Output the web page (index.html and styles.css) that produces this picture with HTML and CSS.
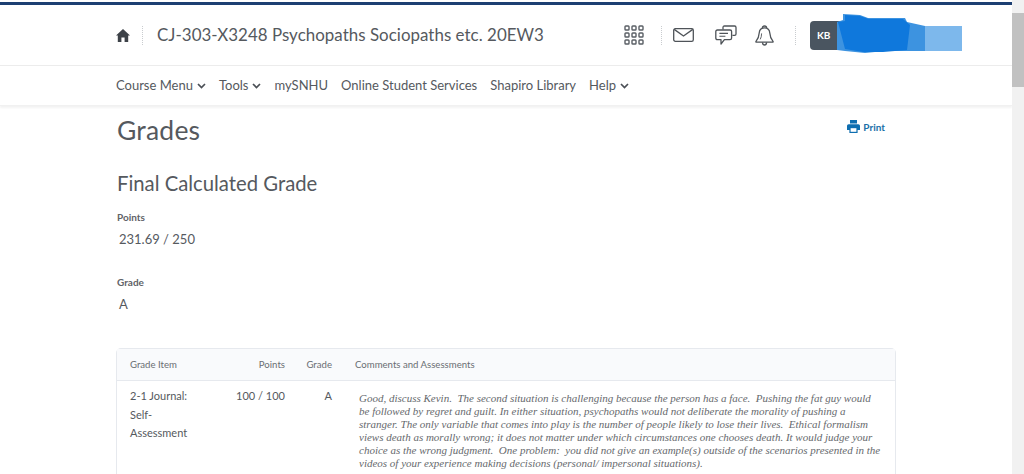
FILE: index.html
```html
<!DOCTYPE html>
<html lang="en">
<head>
<meta charset="utf-8">
<title>Grades</title>
<link rel="stylesheet" href="styles.css">
</head>
<body>
<div class="page">
  <header class="topbar">
    <div class="topbar-inner">
      <svg class="home" viewBox="0 0 14 13" width="14" height="13"><path d="M7 0 L14 6.6 L12.2 6.6 L12.2 13 L8.6 13 L8.6 8.6 L5.4 8.6 L5.4 13 L1.8 13 L1.8 6.6 L0 6.6 Z" fill="#3d4248"/></svg>
      <span class="dots dots-home"></span>
      <span class="course">CJ-303-X3248 Psychopaths Sociopaths etc. 20EW3</span>
      <div class="tools">
        <svg class="ic-grid" width="20" height="20" viewBox="0 0 20 20" fill="none" stroke="#5a5f65" stroke-width="1.4">
          <rect x="1" y="1" width="4" height="4" rx=".8"/><rect x="8" y="1" width="4" height="4" rx=".8"/><rect x="15" y="1" width="4" height="4" rx=".8"/>
          <rect x="1" y="8" width="4" height="4" rx=".8"/><rect x="8" y="8" width="4" height="4" rx=".8"/><rect x="15" y="8" width="4" height="4" rx=".8"/>
          <rect x="1" y="15" width="4" height="4" rx=".8"/><rect x="8" y="15" width="4" height="4" rx=".8"/><rect x="15" y="15" width="4" height="4" rx=".8"/>
        </svg>
        <span class="dots dots-a"></span>
        <svg class="ic-mail" width="21" height="14" viewBox="0 0 21 14" fill="none" stroke="#4f5459" stroke-width="1.3">
          <rect x=".7" y=".7" width="19.6" height="12.6" rx="1.6"/><path d="M1.2 1.4 L10.5 8 L19.8 1.4"/>
        </svg>
        <svg class="ic-chat" width="22" height="21" viewBox="0 0 22 21" fill="none" stroke="#4f5459" stroke-width="1.3" stroke-linejoin="round">
          <path d="M8 4.6 V2.4 Q8 1 9.4 1 H19.6 Q21 1 21 2.4 V9 Q21 10.4 19.6 10.4 H17.4"/>
          <path d="M2.4 5 H15 Q16.6 5 16.6 6.6 V13 Q16.6 14.6 15 14.6 H9.4 L6 19 V14.6 H2.4 Q.8 14.6 .8 13 V6.6 Q.8 5 2.4 5 Z" fill="#fff"/>
          <path d="M4.4 8.4 H13 M4.4 11.2 H10.4" stroke-width="1.1"/>
        </svg>
        <svg class="ic-bell" width="19" height="21" viewBox="0 0 19 21" fill="none" stroke="#4f5459" stroke-width="1.3" stroke-linejoin="round">
          <path d="M7.4 3 Q7.4 1 9.5 1 Q11.6 1 11.6 3"/>
          <path d="M9.5 2.8 Q4.6 2.8 4.2 8 Q3.9 13 1 16.4 Q.6 17.2 1.6 17.2 H17.4 Q18.4 17.2 18 16.4 Q15.1 13 14.8 8 Q14.4 2.8 9.5 2.8 Z"/>
          <path d="M7.4 17.4 Q7.6 20 9.5 20 Q11.4 20 11.6 17.4"/>
          <path d="M6.6 8.4 Q6.6 12 5.2 14.4" stroke-width=".9"/>
        </svg>
        <span class="dots dots-b"></span>
        <div class="user">
          <span class="avatar">KB</span>
          <svg class="redact" width="128" height="42" viewBox="0 0 128 42">
            <rect x="88" y="14" width="39" height="25" fill="#7db8ec"/>
            <path d="M2 10 L8 8 L8 2 L25 3 L33 6 L70 6 L72 10 L90 14 L90 39 L50 39 L30 41 L10 39 L2 38 Z" fill="#3d93e0"/>
            <path d="M3 10 L10 9 L10 3 L25 4 L34 7 L68 7 L75 13 L72 38 L48 40 L28 40 L10 37 Z" fill="#0f78dc"/>
          </svg>
        </div>
      </div>
    </div>
  </header>

  <nav class="navbar">
    <a class="nav-item">Course Menu<svg class="chev" width="9" height="6" viewBox="0 0 9 6"><path d="M1 1 L4.5 4.5 L8 1" fill="none" stroke="#4a4f55" stroke-width="1.7"/></svg></a>
    <a class="nav-item">Tools<svg class="chev" width="9" height="6" viewBox="0 0 9 6"><path d="M1 1 L4.5 4.5 L8 1" fill="none" stroke="#4a4f55" stroke-width="1.7"/></svg></a>
    <a class="nav-item">mySNHU</a>
    <a class="nav-item">Online Student Services</a>
    <a class="nav-item">Shapiro Library</a>
    <a class="nav-item">Help<svg class="chev" width="9" height="6" viewBox="0 0 9 6"><path d="M1 1 L4.5 4.5 L8 1" fill="none" stroke="#4a4f55" stroke-width="1.7"/></svg></a>
  </nav>

  <main class="content">
    <div class="title-row">
      <h1 class="title">Grades</h1>
      <a class="print">
        <svg width="13" height="13" viewBox="0 0 13 13"><path d="M3 0 H10 V3.5 H3 Z M1.6 4.2 H11.4 Q13 4.2 13 5.8 V10 H10.6 V13 H2.4 V10 H0 V5.8 Q0 4.2 1.6 4.2 Z" fill="#0e6eb0"/><rect x="3.6" y="8.2" width="5.8" height="3.6" fill="#fff"/></svg>
        Print
      </a>
    </div>
    <h2 class="subtitle">Final Calculated Grade</h2>
    <div class="field-label">Points</div>
    <div class="field-value">231.69 / 250</div>
    <div class="field-label field-grade">Grade</div>
    <div class="field-value">A</div>

    <div class="table">
      <div class="row head">
        <div class="c-item">Grade Item</div>
        <div class="c-points">Points</div>
        <div class="c-grade">Grade</div>
        <div class="c-comm">Comments and Assessments</div>
      </div>
      <div class="row body-row">
        <div class="c-item">2-1 Journal: Self-Assessment</div>
        <div class="c-points">100 / 100</div>
        <div class="c-grade">A</div>
        <div class="c-comm comment">Good, discuss Kevin.&nbsp; The second situation is challenging because the person has a face.&nbsp; Pushing the fat guy would<br>be followed by regret and guilt. In either situation, psychopaths would not deliberate the morality of pushing a<br>stranger. The only variable that comes into play is the number of people likely to lose their lives.&nbsp; Ethical formalism<br>views death as morally wrong; it does not matter under which circumstances one chooses death. It would judge your<br>choice as the wrong judgment.&nbsp; One problem:&nbsp; you did not give an example(s) outside of the scenarios presented in the<br>videos of your experience making decisions (personal/ impersonal situations).</div>
      </div>
    </div>
  </main>

  <div class="scrollbar">
    <div class="scroll-up"></div>
    <div class="scroll-thumb"></div>
  </div>
</div>
</body>
</html>
```

FILE: styles.css
```css
* { box-sizing: border-box; }
html, body { margin: 0; padding: 0; height: 100%; overflow: hidden; background: #fff; }
body { font-family: Lato, "Open Sans", sans-serif; color: #565a5f; }
.page { position: relative; width: 1024px; height: 474px; overflow: hidden; padding-right: 12px; }

.topbar { margin-top: 2px; border-top: 3px solid #1d3f72; border-bottom: 1px solid #ececec; height: 64px; }
.topbar-inner { display: flex; align-items: center; height: 60px; padding-left: 116px; }
.home { flex: none; margin-top: 1px; }
.dots { display: block; width: 0; height: 19px; border-left: 1px dotted #c9cccf; flex: none; }
.dots-home { margin-left: 12px; }
.course { margin-left: 14px; margin-top: -2px; font-size: 16.9px; letter-spacing: .04px; color: #55595e; white-space: nowrap; }
.tools { display: flex; align-items: center; margin-left: 80px; }
.dots-a { margin-left: 17px; }
.ic-mail { margin-left: 11px; }
.ic-chat { margin-left: 21px; margin-top: 1px; }
.ic-bell { margin-left: 18px; }
.dots-b { margin-left: 21px; }
.user { position: relative; margin-left: 14px; width: 152px; height: 29px; }
.avatar { display: flex; align-items: center; padding-left: 7px; width: 34px; height: 29px; background: #4a5560; border-radius: 4px; color: #fff; font-size: 10px; font-weight: 700; }
.redact { position: absolute; left: 25px; top: -9px; overflow: visible; }

.navbar { display: flex; align-items: center; height: 40px; padding: 0 0 2px 116px; gap: 13px; box-shadow: 0 2px 2px rgba(0,0,0,.05); border-bottom: 1px solid #f1f1f1; }
.nav-item { display: flex; align-items: center; font-size: 13px; color: #55595e; white-space: nowrap; }
.chev { margin-left: 4px; margin-top: 2px; }

.content { padding: 0 116px 0 116px; }
.title-row { display: flex; justify-content: space-between; align-items: flex-start; height: 52px; padding-right: 11px; }
.title { margin: 7px 0 0; padding-left: 1px; font-size: 26.5px; line-height: 34px; font-weight: 400; color: #55595e; letter-spacing: .2px; }
.print { display: flex; align-items: center; gap: 3px; margin-top: 14px; font-size: 10px; font-weight: 700; color: #1a6fa8; }
.subtitle { margin: 12px 0 0; padding-left: 1px; font-size: 20.3px; line-height: 26px; font-weight: 400; color: #55595e; }
.field-label { margin-top: 14px; padding-left: 1px; font-size: 10px; line-height: 14px; font-weight: 700; color: #5f6368; }
.field-grade { margin-top: 26px; }
.field-value { margin-top: 5px; padding-left: 3px; font-size: 13px; line-height: 20px; color: #565a5f; }

.table { margin-top: 34px; width: 780px; border: 1px solid #e6e9ee; border-radius: 5px 5px 0 0; border-bottom: 0; }
.row { display: grid; grid-template-columns: 103px 65px 47px 1fr; }
.head { height: 32px; align-items: center; background: #f9fafc; border-bottom: 1px solid #e6e9ee; font-size: 9.6px; color: #6a6e73; }
.c-item { padding-left: 13px; }
.c-points { text-align: right; }
.c-grade { text-align: right; }
.c-comm { padding-left: 23px; }
.body-row { font-size: 11px; line-height: 18.7px; padding-top: 6px; color: #55595e; height: 100px; }
.body-row .c-item { padding-right: 20px; }
.comment { padding-left: 27px; padding-top: 5px; font-family: "Liberation Serif", serif; font-style: italic; font-size: 11px; line-height: 13px; color: #66696d; white-space: nowrap; }

.scrollbar { position: absolute; right: 0; top: 0; width: 12px; height: 100%; background: #f1f1f1; }
.scroll-up { height: 13px; }
.scroll-thumb { height: 74px; background: #c1c1c1; }
```
